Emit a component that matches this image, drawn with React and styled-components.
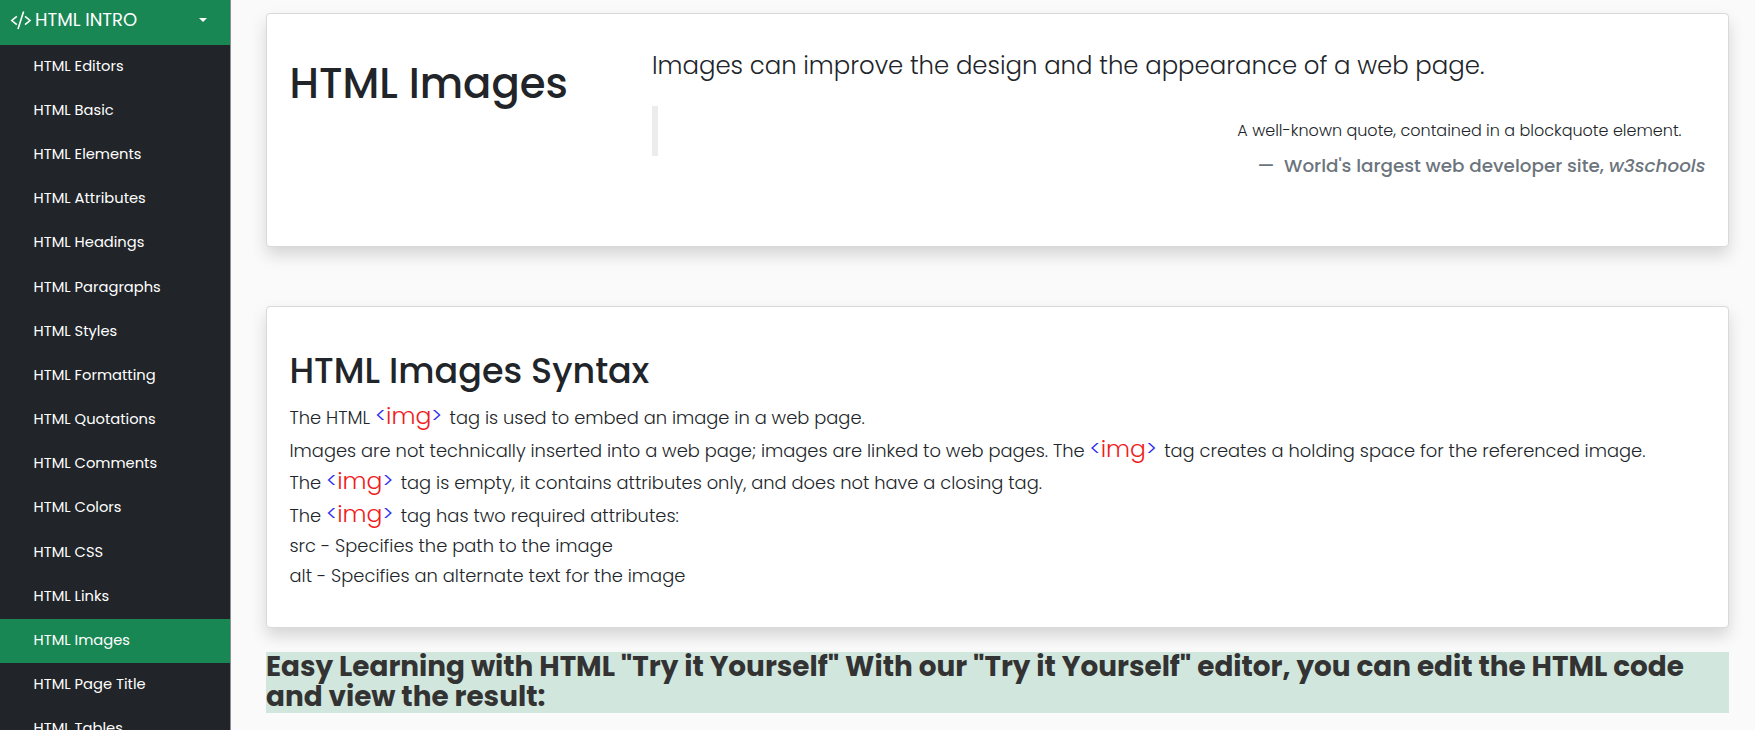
import React from 'react';
import styled, { createGlobalStyle } from 'styled-components';

const Global = createGlobalStyle`
  * { box-sizing: border-box; }
  body {
    margin: 0;
    overflow: hidden;
    background: #fafafa;
    color: #212529;
    font-family: Poppins, Inter, sans-serif;
  }
`;

const Page = styled.div`
  display: flex;
  height: 730px;
  overflow: hidden;
`;

const Sidebar = styled.nav`
  flex: 0 0 231px;
  background: #212529;
  border-right: 1px solid #8d9092;
  color: #fff;
  overflow: hidden;
`;

const MenuHeader = styled.div`
  display: flex;
  align-items: center;
  height: 44.5px;
  padding: 0 23px 5.5px 10px;
  background: #198754;
  font-size: 18px;
`;

const CodeIcon = styled.svg`
  width: 22px;
  height: 20px;
  margin-right: 3px;
`;

const Caret = styled.span`
  margin-left: auto;
  border: 4.5px solid transparent;
  border-top-color: #fff;
  border-bottom: 0;
`;

const MenuItem = styled.a`
  display: flex;
  align-items: center;
  height: 44.19px;
  padding: 0 0 1px 33.6px;
  background: ${(p) => (p.$active ? '#198754' : 'transparent')};
  font-size: 14.7px;
  white-space: nowrap;
`;

const Content = styled.main`
  flex: 1;
  min-width: 0;
  padding: 13px 26px 0 35px;
`;

const Card = styled.section`
  height: ${(p) => p.$height}px;
  margin-bottom: ${(p) => p.$gap}px;
  padding: ${(p) => p.$top}px 22.5px 0 22.5px;
  background: #fff;
  border: 1px solid rgba(0, 0, 0, 0.15);
  border-radius: 4.5px;
  box-shadow: 0 8px 16px rgba(0, 0, 0, 0.15);
`;

const IntroCard = styled(Card)`
  display: grid;
  grid-template-columns: 362.5px 1fr;
`;

const Title = styled.h1`
  margin: 12px 0 0;
  font-size: 41.75px;
  line-height: 48px;
  font-weight: 500;
  white-space: nowrap;
`;

const Lead = styled.p`
  margin: 0 0 22.5px;
  font-size: 24.4px;
  line-height: 36px;
  font-weight: 300;
`;

const Quote = styled.blockquote`
  display: flex;
  align-items: center;
  justify-content: flex-end;
  height: 50px;
  margin: 0;
  padding: 0 24px 1px 0;
  border-left: 6px solid #ececec;
  font-size: 16px;
  font-weight: 300;
`;

const QuoteSource = styled.div`
  margin-top: -4.5px;
  color: #6c757d;
  font-size: 18.35px;
  line-height: 27px;
  font-weight: 500;
  text-align: right;
  white-space: pre;
`;

const Subtitle = styled.h2`
  margin: 0 0 11px;
  font-size: 34.9px;
  line-height: 40px;
  font-weight: 500;
  white-space: nowrap;
`;

const Line = styled.p`
  height: 32.5px;
  margin: 0;
  font-size: 17.87px;
  line-height: 32.5px;
  font-weight: 300;
  white-space: nowrap;
`;

const Attribute = styled(Line)`
  height: 30.2px;
  line-height: 27.5px;
`;

const TagBox = styled.code`
  margin-right: 2.5px;
  color: #f01c1c;
  font-family: inherit;
  font-size: 23.5px;
  line-height: 0;
`;

const Bracket = styled.span`
  color: #2a2af0;
  font-size: 22px;
  vertical-align: 1px;
`;

const Banner = styled.h3`
  margin: 0;
  height: 61.5px;
  background: #d1e7dd;
  color: #333;
  font-size: 27.87px;
  line-height: 30.7px;
  font-weight: 700;
`;

const menu = [
  'Editors',
  'Basic',
  'Elements',
  'Attributes',
  'Headings',
  'Paragraphs',
  'Styles',
  'Formatting',
  'Quotations',
  'Comments',
  'Colors',
  'CSS',
  'Links',
  'Images',
  'Page Title',
  'Tables',
];

const ImgTag = () => (
  <TagBox>
    <Bracket>&lt;</Bracket>img<Bracket>&gt;</Bracket>
  </TagBox>
);

export default function App() {
  return (
    <Page>
      <Global />
      <Sidebar>
        <MenuHeader>
          <CodeIcon viewBox="0 0 22 20" fill="none" stroke="#fff" strokeWidth="1.6">
            <path d="M6.8 6.3 1.8 10.5 6.8 14.7M13.6 1.5 8 19M15 6.3 20 10.5 15 14.7" />
          </CodeIcon>
          HTML INTRO
          <Caret />
        </MenuHeader>
        {menu.map((name) => (
          <MenuItem key={name} $active={name === 'Images'}>
            {`HTML ${name}`}
          </MenuItem>
        ))}
      </Sidebar>
      <Content>
        <IntroCard $height={233.5} $gap={59.5} $top={33.5}>
          <Title>HTML Images</Title>
          <div>
            <Lead>Images can improve the design and the appearance of a web page.</Lead>
            <Quote>A well-known quote, contained in a blockquote element.</Quote>
            <QuoteSource>
              {"—\u00a0 World's largest web developer site, "}
              <em>w3schools</em>
            </QuoteSource>
          </div>
        </IntroCard>
        <Card $height={321.5} $gap={24} $top={44}>
          <Subtitle>HTML Images Syntax</Subtitle>
          <Line>
            The HTML <ImgTag /> tag is used to embed an image in a web page.
          </Line>
          <Line>
            Images are not technically inserted into a web page; images are linked to web pages. The{' '}
            <ImgTag /> tag creates a holding space for the referenced image.
          </Line>
          <Line>
            The <ImgTag /> tag is empty, it contains attributes only, and does not have a closing tag.
          </Line>
          <Line>
            The <ImgTag /> tag has two required attributes:
          </Line>
          <Attribute>src - Specifies the path to the image</Attribute>
          <Attribute>alt - Specifies an alternate text for the image</Attribute>
        </Card>
        <Banner>
          Easy Learning with HTML "Try it Yourself" With our "Try it Yourself" editor, you can edit the HTML code and
          view the result:
        </Banner>
      </Content>
    </Page>
  );
}
